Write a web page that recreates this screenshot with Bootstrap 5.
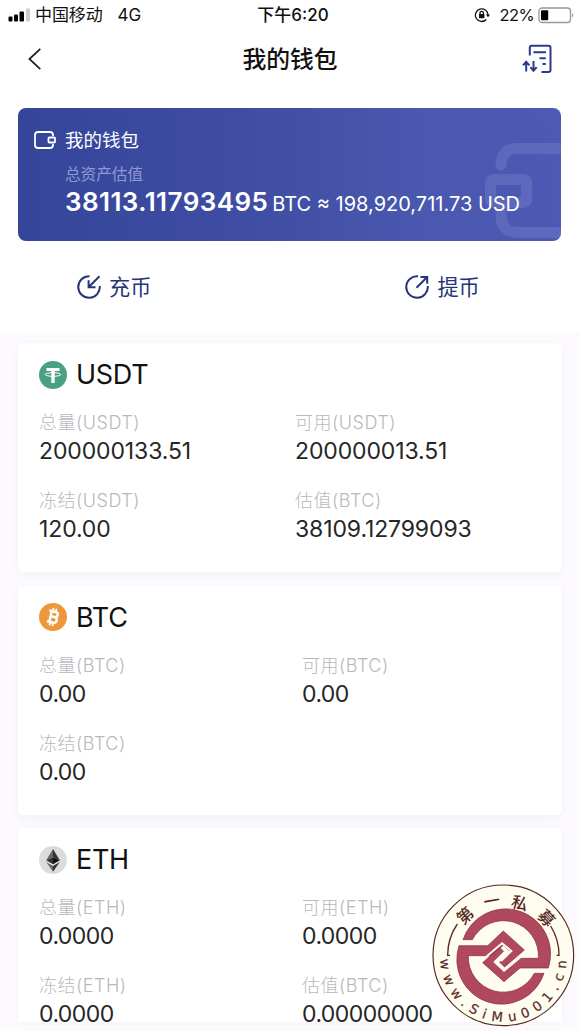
<!DOCTYPE html>
<html lang="zh-CN">
  <head>
    <meta charset="utf-8">
    <meta name="viewport" content="width=device-width, initial-scale=1">
    <title>我的钱包</title>
    <link href="https://cdn.jsdelivr.net/npm/bootstrap@5.3.3/dist/css/bootstrap.min.css" rel="stylesheet">
    <script src="https://cdn.jsdelivr.net/npm/bootstrap@5.3.3/dist/js/bootstrap.bundle.min.js"></script>
    <style>
      body {
        font-family: Inter, "Noto Sans CJK SC", sans-serif;
        color: #111;
        background: #fff;
        height: 1031px;
        overflow: hidden;
      }
      svg { display: block; flex: none; }
      .status-bar { height: 30px; font-size: 17px; line-height: 30px; padding: 0 5px 0 8px; }
      .status-side { flex: 1 1 0; }
      .carrier { margin-left: 5px; letter-spacing: -.1px; }
      .signal-type { margin-left: 15px; }
      .clock { font-weight: 500; font-size: 17px; margin-left: 3px; }
      .percent { margin: 0 4px 0 9px; font-size: 16.5px; letter-spacing: -.6px; }
      .title-bar { height: 58px; padding: 0 28px; }
      .title-bar h1 { font-size: 23.8px; font-weight: 500; line-height: 56px; padding-top: 2px; }
      .title-side { width: 60px; }

      .wallet-hero {
        height: 133px;
        margin: 20px 19px 0 18px;
        padding: 19px 16px 0;
        border-radius: 8px;
        color: #fff;
        background: linear-gradient(90deg, #34459a, #414fa5 50%, #4a58af 75%, #4c5ab4);
      }
      .hero-mark { right: 0; bottom: 0; }
      .hero-name { font-size: 18.5px; line-height: 26px; margin-left: 9px; }
      .hero-body { padding-left: 31px; }
      .hero-label { font-size: 15.6px; line-height: 24px; margin-top: 10px; color: #8f99d0; }
      .hero-total { font-size: 26px; font-weight: 600; line-height: 30px; letter-spacing: .42px; }
      .hero-usd { font-size: 20px; margin-left: 4px; }

      .actions { height: 91px; padding: 1px 0 0 77px; gap: 254px; color: #263579; font-size: 21.2px; }
      .actions > div { gap: 8px; }
      .actions span { padding-top: 2px; }

      .coin-area { height: 699px; background: #fdfaff; padding: 11px 18px 9px; gap: 13.5px; }
      .coin-box {
        flex: 0 0 229px;
        background: #fff;
        border-radius: 5px;
        padding: 17px 21px 0;
        box-shadow: 0 3px 8px rgba(40, 30, 50, .045);
      }
      .coin-box:last-child { flex: 0 0 194px; min-height: 0; border-radius: 5px 5px 0 0; box-shadow: 0 0 7px rgba(40, 30, 50, .035); }
      .coin-name { font-size: 27px; line-height: 28px; margin-left: 9px; padding-top: 1px; letter-spacing: -.3px; }
      .coin-grid { display: grid; row-gap: 22px; margin-top: 21px; }
      .coin-label { font-size: 18px; line-height: 26px; color: #bab7bd; font-weight: 300; letter-spacing: .5px; }
      .coin-value { font-size: 23px; line-height: 30px; color: #262626; white-space: nowrap; letter-spacing: -.12px; }
      .coin-value.zero { letter-spacing: -.55px; }

      .stamp { left: 420px; top: 870px; }
    </style>
  </head>
  <body class="position-relative">
    <header>
      <div class="status-bar d-flex align-items-center">
        <div class="status-side d-flex align-items-center">
          <svg width="22" height="14" viewBox="0 0 22 14">
            <rect x="0.5" y="8.5" width="4" height="5" rx="1"/>
            <rect x="6" y="6.5" width="4" height="7" rx="1"/>
            <rect x="11.5" y="3.5" width="4.5" height="10" rx="1"/>
            <rect x="18" y="0.5" width="4" height="13" rx="1" fill="#ccc"/>
          </svg>
          <span class="carrier">中国移动</span><span class="signal-type">4G</span>
        </div>
        <div class="clock">下午6:20</div>
        <div class="status-side d-flex align-items-center justify-content-end">
          <svg width="16" height="16" viewBox="0 0 16 16" fill="none" stroke="#111" stroke-width="1.3">
            <path d="M12.3 12.5A6.3 6.3 0 1 1 14 8"/>
            <path d="M12 7.4h4l-2 2.8z" fill="#111" stroke="none"/>
            <rect x="5" y="7" width="5.4" height="4.2" rx=".5" fill="#111" stroke="none"/>
            <path d="M6 7.2V6a1.7 1.7 0 0 1 3.4 0v1.2"/>
          </svg>
          <span class="percent">22%</span>
          <svg width="37" height="17" viewBox="0 0 37 17">
            <rect x="1" y="1" width="31.5" height="14.5" rx="3" fill="none" stroke="#999" stroke-width="1.3"/>
            <rect x="3" y="3.2" width="7.2" height="10" rx="1"/>
            <path d="M34.2 6q2.2 2.3 0 4.6z" fill="#888"/>
          </svg>
        </div>
      </div>
      <div class="title-bar d-flex align-items-center justify-content-between">
        <div class="title-side">
          <svg width="14" height="22" viewBox="0 0 14 22" fill="none" stroke="#222" stroke-width="1.8"><path d="M12.3.8 1.4 11l10.9 10.2"/></svg>
        </div>
        <h1 class="m-0">我的钱包</h1>
        <div class="title-side d-flex justify-content-end">
          <svg width="30" height="30" viewBox="0 0 30 30" fill="none" stroke="#2d3c88" stroke-width="2">
            <path d="M7.8 11.500V3.500Q7.800 1.700 9.600 1.700H26.500q2 0 2 2v22.300q0 2-2 2H19.500"/>
            <path d="M11.500 8.200h12.500M17.500 14.200h6.300M20.500 20h3.300"/>
            <path d="M4.200 27.500v-9.500M1 21.300l3.200-3.500 3.200 3.500M11.500 17v9.500M8.300 23.200l3.200 3.500 3.200-3.500"/>
          </svg>
        </div>
      </div>
    </header>

    <section class="wallet-hero position-relative overflow-hidden">
      <svg class="hero-mark position-absolute" width="82" height="100" viewBox="0 0 82 100" fill="none" stroke="#7078c5" stroke-width="11" stroke-linecap="round" opacity=".5">
        <path d="M22 24C22 12 29 7.500 38 7.500H90M22 66V74C22 86 29 91.500 38 91.500H90"/>
        <rect x="11.500" y="38.500" width="36" height="23" rx="3"/>
      </svg>
      <div class="d-flex align-items-center">
        <svg width="22" height="18" viewBox="0 0 22 18" fill="none" stroke="#fff" stroke-width="1.8">
          <path d="M19 5V4q0-3-3-3H4Q1 1 1 4v10q0 3 3 3h12q3 0 3-3v-1"/>
          <rect x="14.500" y="6.500" width="6.500" height="5" rx=".8"/>
        </svg>
        <span class="hero-name">我的钱包</span>
      </div>
      <div class="hero-body position-relative">
        <div class="hero-label">总资产估值</div>
        <div class="d-flex align-items-baseline text-nowrap">
          <span class="hero-total">38113.11793495</span>
          <span class="hero-usd">BTC ≈ 198,920,711.73 USD</span>
        </div>
      </div>
    </section>

    <section class="actions d-flex align-items-center">
      <div class="d-flex align-items-center">
        <svg width="24" height="24" viewBox="0 0 24 24" fill="none" stroke="#263579" stroke-width="2">
          <path d="M12.500 1.200A10.800 10.800 0 1 0 22.800 11"/>
          <path d="M22.500 1.300 12 11.800M11.600 5.300v6.900h6.900"/>
        </svg>
        <span>充币</span>
      </div>
      <div class="d-flex align-items-center">
        <svg width="24" height="24" viewBox="0 0 24 24" fill="none" stroke="#263579" stroke-width="2">
          <path d="M13 1.200A10.800 10.800 0 1 0 22.800 11"/>
          <path d="M11.500 12.700 22 2.200M15.500 2h6.700v6.700"/>
        </svg>
        <span>提币</span>
      </div>
    </section>

    <main class="coin-area d-flex flex-column" id="coinList"></main>

    <svg class="stamp position-absolute" width="160" height="161" viewBox="0 0 480 483">
      <circle cx="250" cy="256" r="211" fill="#fffdf0" stroke="#58291f" stroke-width="3.500"/>
      <path d="M90 256H83A167 167 0 0 1 112 162M410 256H417A167 167 0 0 0 392 168" fill="none" stroke="#58291f" stroke-width="4"/>
      <!-- two interlocking halves -->
      <g fill="#b0485f" stroke="#7d2d40" stroke-width="2">
        <path d="M129 209A133 133 0 0 1 385 294H300L252 335 188 278 238 232 252 245 221 276 252 305 294 265H355A105 105 0 0 0 157 209z"/>
        <path d="M372 310A133 133 0 0 1 117 227H203L250 183 313 240 254 291 239 277 271 245 250 226 210 257H145A105 105 0 0 0 343 310z"/>
      </g>
      <path d="M190 268 246 220 274 243 243 273M312 253 252 302 224 276 254 246" fill="none" stroke="#fffdf0" stroke-width="6"/>
      <g fill="#58291f" font-family="'Noto Sans CJK SC', sans-serif" font-weight="500" font-size="49" text-anchor="middle">
        <text transform="translate(135 137) rotate(-43)" y="18">第</text>
        <text transform="translate(215 93) rotate(-10)" y="18">一</text>
        <text transform="translate(299 99) rotate(15)" y="18">私</text>
        <text transform="translate(379 144) rotate(47)" y="18">募</text>
      </g>
      <path id="stampArc" d="M61 266A189 189 0 0 0 439 266" fill="none"/>
      <text fill="#58291f" stroke="#58291f" stroke-width=".6" font-family="'DejaVu Sans', sans-serif" font-size="40"><textPath href="#stampArc" startOffset="2" textLength="586">www.SiMu001.cn</textPath></text>
    </svg>

    <script>
      const coins = [
        {
          name: "USDT", firstCol: 256,
          icon: `<circle cx="14" cy="14" r="14" fill="#4aa181"/><path d="M7.500 7h13v3h-4.800v12h-3.400V10H7.500z" fill="#fff"/><ellipse cx="14" cy="13.500" rx="7.800" ry="1.800" fill="none" stroke="#fff" stroke-width="1"/>`,
          items: [["总量(USDT)", "200000133.51"], ["可用(USDT)", "200000013.51"], ["冻结(USDT)", "120.00"], ["估值(BTC)", "38109.12799093"]]
        },
        {
          name: "BTC", firstCol: 263,
          icon: `<circle cx="14" cy="14" r="14" fill="#ed983b"/><g transform="rotate(13 14 14)" fill="none" stroke="#fff"><path d="M9 8.500h6.500a2.600 2.600 0 0 1 0 5.200H11.500M15.500 13.700a2.900 2.900 0 0 1 0 5.800H9M11.500 8.500v11" stroke-width="2.500"/><path d="M12.500 5v3.500M15.500 5v3.500M12.500 19.500V23M15.500 19.500V23" stroke-width="1.700"/></g>`,
          items: [["总量(BTC)", "0.00"], ["可用(BTC)", "0.00"], ["冻结(BTC)", "0.00"]]
        },
        {
          name: "ETH", firstCol: 263,
          icon: `<circle cx="14" cy="14" r="14" fill="#dcdcdc"/><path d="M14 3 7.200 14.300 14 11.300z" fill="#666"/><path d="M14 3v8.300l6.800 3z" fill="#333"/><path d="M7.200 14.300 14 11.300v7z" fill="#333"/><path d="M14 11.300v7l6.800-4z" fill="#111"/><path d="M7.200 16 14 20v5.800z" fill="#666"/><path d="M20.800 16 14 20v5.800z" fill="#333"/>`,
          items: [["总量(ETH)", "0.0000"], ["可用(ETH)", "0.0000"], ["冻结(ETH)", "0.0000"], ["估值(BTC)", "0.00000000"]]
        }
      ]

      const coinList = document.querySelector("#coinList")

      for (let i = 0; i < coins.length; i++) {
        const coin = coins[i]
        const box = document.createElement("section")
        box.className = "coin-box"
        box.innerHTML = `
          <div class="d-flex align-items-center">
            <svg width="28" height="28" viewBox="0 0 28 28">${coin.icon}</svg>
            <span class="coin-name">${coin.name}</span>
          </div>
          <div class="coin-grid" style="grid-template-columns: ${coin.firstCol}px 1fr">
            ${coin.items.map(item => `<div><div class="coin-label">${item[0]}</div><div class="coin-value ${Number(item[1]) === 0 ? "zero" : ""}">${item[1]}</div></div>`).join("")}
          </div>`
        coinList.appendChild(box)
      }
    </script>
  </body>
</html>
